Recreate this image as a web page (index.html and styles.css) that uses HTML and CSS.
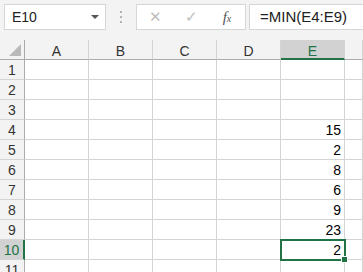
FILE: index.html
```html
<!DOCTYPE html>
<html>
<head>
<meta charset="utf-8">
<link rel="stylesheet" href="styles.css">
</head>
<body>
<div class="formulaBar">
  <div class="nameBox"><span>E10</span><span class="drop"></span></div>
  <div class="grip"><i></i><i></i><i></i></div>
  <div class="fnBox">
    <span class="btn cancel">&#x2715;</span>
    <span class="btn enter">&#x2713;</span>
    <span class="btn fx">f<sub>x</sub></span>
  </div>
  <div class="formula">=MIN(E4:E9)</div>
</div>
<div class="sheet">
  <div class="corner"><span class="tri"></span></div>
  <div class="colHead">A</div>
  <div class="colHead">B</div>
  <div class="colHead">C</div>
  <div class="colHead">D</div>
  <div class="colHead sel">E</div>
  <div class="colHead"></div>
</div>
<script>
var vals = {4: 15, 5: 2, 6: 8, 7: 6, 8: 9, 9: 23, 10: 2};
var sheet = document.querySelector('.sheet');
for (var r = 1; r <= 11; r++) {
  var h = document.createElement('div');
  h.className = 'rowHead' + (r == 10 ? ' sel' : '');
  h.textContent = r;
  sheet.appendChild(h);
  for (var c = 0; c < 6; c++) {
    var d = document.createElement('div');
    d.className = 'cell';
    if (c == 4 && vals[r] != null) d.textContent = vals[r];
    if (c == 4 && r == 10) { d.className += ' active'; d.innerHTML += '<span class="handle"></span>'; }
    sheet.appendChild(d);
  }
}
</script>
</body>
</html>
```

FILE: styles.css
```css
body
{
	margin: 0;
	width: 363px;
	height: 272px;
	overflow: hidden;
	background-color: #fff;
	font-family: "Liberation Sans", Arial, sans-serif;
	color: #000;
}
.formulaBar
{
	display: flex;
	align-items: flex-start;
	height: 40px;
	box-sizing: border-box;
	padding-top: 4px;
	background-color: #f3f3f3;
}
.nameBox
{
	display: flex;
	align-items: center;
	justify-content: space-between;
	box-sizing: border-box;
	width: 102px;
	height: 26px;
	margin-left: 4px;
	padding: 0 6px 0 7px;
	background: #fff;
	border: 1px solid #d6d6d6;
	font-size: 14px;
	color: #222;
}
.drop
{
	width: 0;
	height: 0;
	border-left: 4px solid transparent;
	border-right: 4px solid transparent;
	border-top: 4px solid #555;
}
.grip
{
	display: flex;
	flex-direction: column;
	gap: 3px;
	width: 30px;
	align-items: center;
	padding-top: 7px;
}
.grip i
{
	width: 2px;
	height: 2px;
	background: #b4b4b4;
}
.fnBox
{
	display: flex;
	align-items: center;
	box-sizing: border-box;
	width: 110px;
	height: 26px;
	background: #fff;
	border: 1px solid #d6d6d6;
}
.btn
{
	width: 36px;
	text-align: center;
	color: #bdbdbd;
	font-size: 15px;
}
.fx
{
	font-family: "Liberation Serif", serif;
	font-style: italic;
	color: #555;
	font-size: 15px;
}
.fx sub
{
	font-size: 10px;
	vertical-align: baseline;
}
.formula
{
	flex: 1;
	box-sizing: border-box;
	height: 26px;
	margin-left: 3px;
	padding: 3px 0 0 10px;
	background: #fff;
	border: 1px solid #d6d6d6;
	border-right: none;
	font-size: 15px;
	color: #222;
}
.sheet
{
	display: grid;
	grid-template-columns: 25px repeat(5, 64px) 18px;
	grid-auto-rows: 20px;
}
.corner, .colHead, .rowHead
{
	box-sizing: border-box;
	background: #f3f3f3;
	color: #333;
	font-size: 14px;
	display: flex;
	align-items: center;
	justify-content: center;
}
.corner
{
	border-right: 1px solid #ababab;
	border-bottom: 1px solid #ababab;
	position: relative;
}
.tri
{
	position: absolute;
	right: 3px;
	bottom: 3px;
	width: 0;
	height: 0;
	border-left: 12px solid transparent;
	border-bottom: 12px solid #b9b9b9;
}
.colHead
{
	border-right: 1px solid #d4d4d4;
	border-bottom: 1px solid #ababab;
	padding-top: 2px;
}
.colHead.sel
{
	background: #d2d2d2;
	color: #217346;
	border-bottom: 2px solid #217346;
	padding-top: 3px;
}
.rowHead
{
	border-right: 1px solid #ababab;
	border-bottom: 1px solid #d4d4d4;
	padding-top: 1px;
}
.rowHead.sel
{
	background: #d2d2d2;
	color: #217346;
	border-right: 2px solid #217346;
}
.cell
{
	box-sizing: border-box;
	border-right: 1px solid #d4d4d4;
	border-bottom: 1px solid #d4d4d4;
	text-align: right;
	font-size: 14px;
	padding: 2px 3px 0 0;
	position: relative;
}
.cell.active
{
	outline: 2px solid #217346;
	outline-offset: -1px;
	z-index: 1;
}
.handle
{
	position: absolute;
	right: -4px;
	bottom: -4px;
	width: 5px;
	height: 5px;
	background: #217346;
	border: 1px solid #fff;
}
```
